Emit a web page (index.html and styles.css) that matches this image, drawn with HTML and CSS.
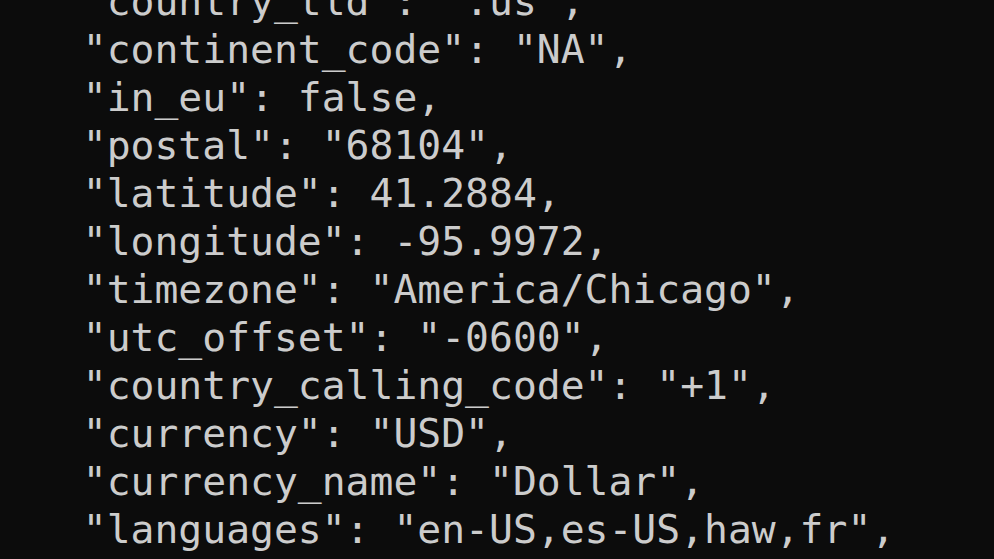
FILE: index.html
```html
<!DOCTYPE html>
<html>
<head>
<meta charset="utf-8">
<link rel="stylesheet" href="styles.css">
</head>
<body>
<pre class="term">  "country_tld": ".us",
  "continent_code": "NA",
  "in_eu": false,
  "postal": "68104",
  "latitude": 41.2884,
  "longitude": -95.9972,
  "timezone": "America/Chicago",
  "utc_offset": "-0600",
  "country_calling_code": "+1",
  "currency": "USD",
  "currency_name": "Dollar",
  "languages": "en-US,es-US,haw,fr",</pre>
</body>
</html>
```
FILE: styles.css
```css
html, body {
  margin: 0;
  padding: 0;
  background: #0c0c0c;
  width: 994px;
  height: 559px;
  overflow: hidden;
}
.term {
  margin: -23px 0 0 35px;
  color: #cccccc;
  font-family: "DejaVu Sans Mono", monospace;
  font-size: 39.7px;
  line-height: 48px;
  white-space: pre;
}
```
